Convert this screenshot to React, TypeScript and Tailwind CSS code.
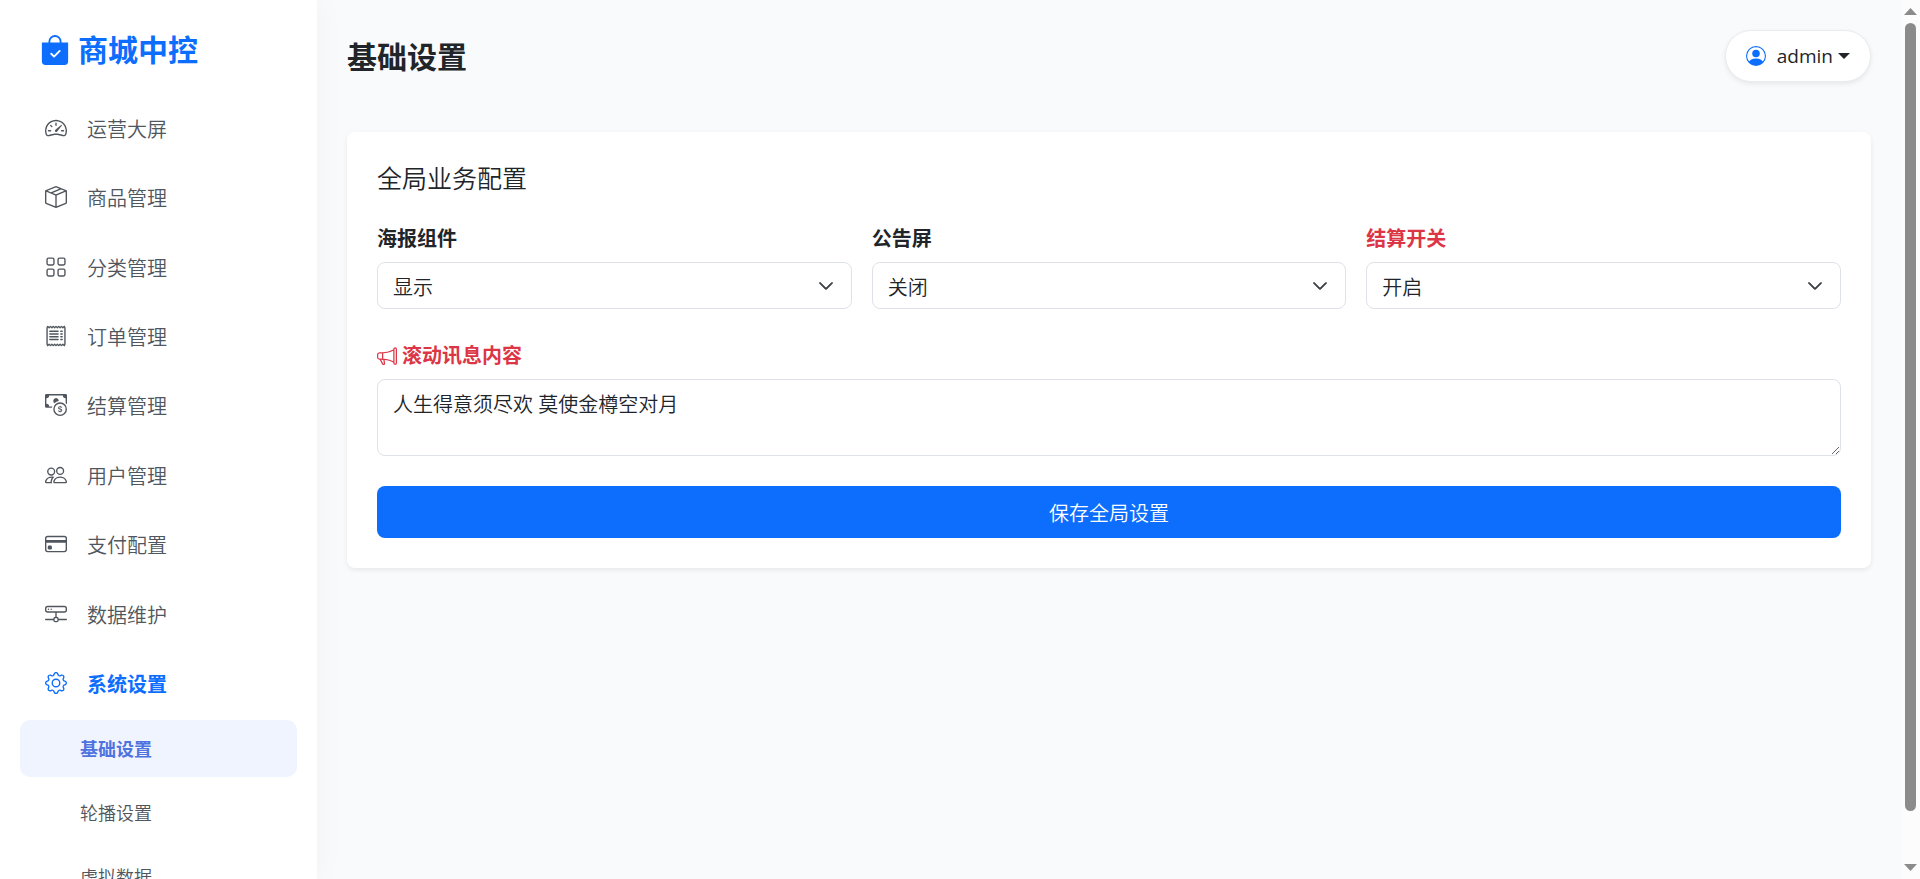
import { useState } from "react";
import type { IconType } from "react-icons";
import {
  BsBagCheckFill,
  BsBoxSeam,
  BsCashCoin,
  BsChevronDown,
  BsCreditCard,
  BsGear,
  BsGrid,
  BsHddNetwork,
  BsMegaphone,
  BsPeople,
  BsPersonCircle,
  BsReceipt,
  BsSpeedometer2,
} from "react-icons/bs";

type NavItem = { label: string; icon: IconType; active?: boolean };

const NAV: NavItem[] = [
  { label: "运营大屏", icon: BsSpeedometer2 },
  { label: "商品管理", icon: BsBoxSeam },
  { label: "分类管理", icon: BsGrid },
  { label: "订单管理", icon: BsReceipt },
  { label: "结算管理", icon: BsCashCoin },
  { label: "用户管理", icon: BsPeople },
  { label: "支付配置", icon: BsCreditCard },
  { label: "数据维护", icon: BsHddNetwork },
  { label: "系统设置", icon: BsGear, active: true },
];

const SUB_NAV = ["基础设置", "轮播设置", "虚拟数据"];

function Sidebar() {
  return (
    <aside className="z-10 flex w-[317px] shrink-0 flex-col overflow-hidden bg-white shadow-[0_0_30px_rgba(0,0,0,0.04)]">
      <div className="flex h-[95px] shrink-0 items-center gap-2 pt-1 pl-10 text-[30px] font-bold text-[#0d6efd]">
        <BsBagCheckFill />
        <span>商城中控</span>
      </div>
      <nav className="px-5">
        <div className="grid h-[625px] auto-rows-fr">
          {NAV.map(({ label, icon: Icon, active }) => (
            <a
              key={label}
              href="#"
              className={`flex items-center gap-5 pl-[25px] text-xl ${
                active ? "font-bold text-[#0d6efd]" : "text-[#50565d]"
              }`}
            >
              <Icon className="mb-1 size-[22px]" />
              {label}
            </a>
          ))}
        </div>
        {SUB_NAV.map((label, i) => (
          <a
            key={label}
            href="#"
            className={`mb-[7px] flex h-[57px] items-center rounded-[10px] pl-[60px] text-lg ${
              i === 0 ? "bg-[#f0f4ff] font-bold text-[#4e73df]" : "text-[#50565d]"
            }`}
          >
            {label}
          </a>
        ))}
      </nav>
    </aside>
  );
}

type SelectFieldProps = { id: string; label: string; options: string[]; danger?: boolean };

function SelectField({ id, label, options, danger }: SelectFieldProps) {
  return (
    <div>
      <label
        htmlFor={id}
        className={`mb-2 block text-xl leading-[30px] font-bold ${danger ? "text-[#dc3545]" : ""}`}
      >
        {label}
      </label>
      <div className="relative">
        <select
          id={id}
          className="h-[47px] w-full appearance-none rounded-lg border border-[#dee2e6] bg-white px-[15px] pt-1 text-xl"
        >
          {options.map((o) => (
            <option key={o}>{o}</option>
          ))}
        </select>
        <BsChevronDown className="pointer-events-none absolute top-4 right-[18px] size-4 stroke-1 text-[#343a40]" />
      </div>
    </div>
  );
}

/* page scroll rail */
function ScrollRail() {
  return (
    <div className="flex w-[19px] shrink-0 flex-col items-center bg-[#fcfcfc] py-2">
      <svg width="13" height="7" viewBox="0 0 13 7" fill="#8b8b8b">
        <path d="M6.5 0 13 7H0z" />
      </svg>
      <div className="mt-2 mb-[53px] w-[11px] flex-1 rounded-full bg-[#8b8b8b]" />
      <svg width="13" height="7" viewBox="0 0 13 7" fill="#8b8b8b">
        <path d="M0 0h13L6.5 7z" />
      </svg>
    </div>
  );
}

export default function App() {
  const [notice, setNotice] = useState("人生得意须尽欢 莫使金樽空对月");

  return (
    <div className="flex h-screen overflow-hidden bg-[#f8fafc] font-['Open_Sans','Noto_Sans_CJK_SC',sans-serif] font-[350] text-[#212529]">
      <Sidebar />

      <main className="min-w-0 flex-1 px-[30px] pt-[30px]">
        <header className="mb-12 flex items-start justify-between">
          <h1 className="text-[30px] leading-[54px] font-bold">基础设置</h1>
          <button className="flex h-[52px] items-center rounded-full border border-[#e9ecef] bg-white px-5 text-[19px] font-normal shadow-[0_2px_5px_rgba(0,0,0,0.075)]">
            <BsPersonCircle className="mr-[11px] size-5 text-[#0d6efd]" />
            admin
            <svg className="ml-[5px]" width="12" height="6" viewBox="0 0 12 6" fill="currentColor">
              <path d="M0 0h12L6 6z" />
            </svg>
          </button>
        </header>

        <form
          className="rounded-lg bg-white p-[30px] shadow-[0_2px_5px_rgba(0,0,0,0.075)]"
          onSubmit={(e) => e.preventDefault()}
        >
          <h2 className="mb-[30px] text-[25px] leading-8">全局业务配置</h2>

          <div className="grid grid-cols-3 gap-5">
            <SelectField id="poster" label="海报组件" options={["显示", "隐藏"]} />
            <SelectField id="board" label="公告屏" options={["关闭", "开启"]} />
            <SelectField id="checkout" label="结算开关" options={["开启", "关闭"]} danger />
          </div>

          <label
            htmlFor="notice"
            className="mt-8 mb-2 flex items-center gap-[5px] text-xl leading-[30px] font-bold text-[#dc3545]"
          >
            <BsMegaphone />
            滚动讯息内容
          </label>
          <textarea
            id="notice"
            value={notice}
            onChange={(e) => setNotice(e.target.value)}
            className="block h-[77px] w-full resize-y rounded-lg border border-[#dee2e6] px-[15px] py-[10px] text-xl leading-[30px]"
          />

          <button
            type="submit"
            className="mt-[30px] h-[52px] w-full rounded-lg bg-[#0d6efd] pt-1 text-xl text-white"
          >
            保存全局设置
          </button>
        </form>
      </main>

      <ScrollRail />
    </div>
  );
}
